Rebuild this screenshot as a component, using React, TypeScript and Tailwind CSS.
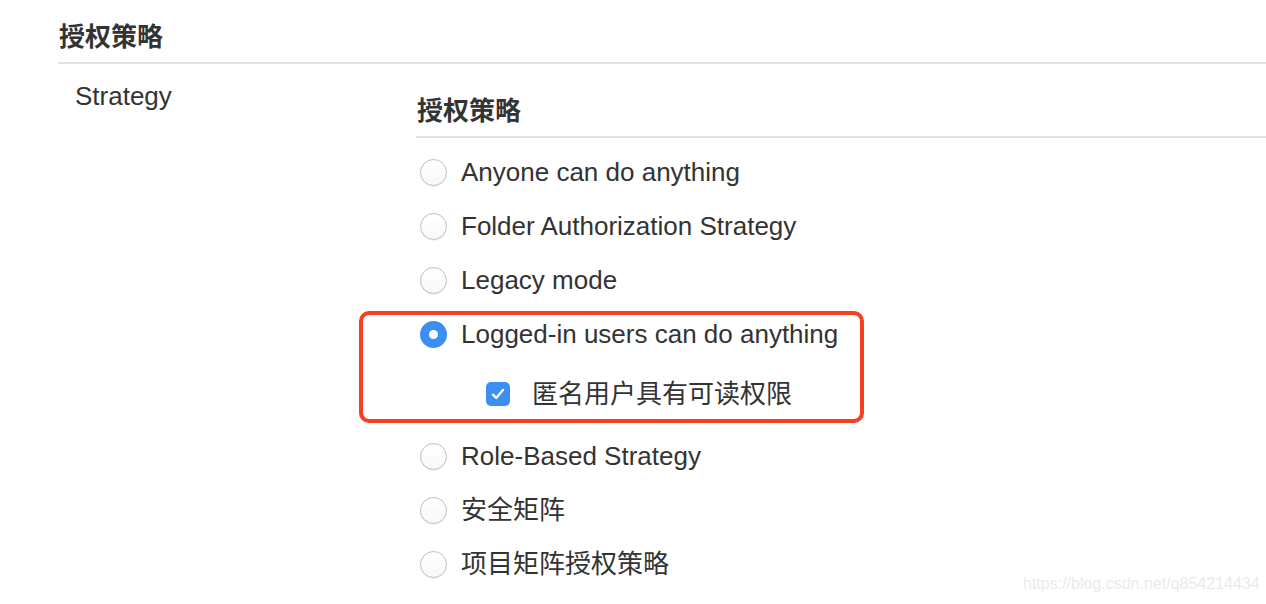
import React from "react";

interface Option {
  label: string;
  checked?: boolean;
}

const options: Option[] = [
  { label: "Anyone can do anything" },
  { label: "Folder Authorization Strategy" },
  { label: "Legacy mode" },
  { label: "Logged-in users can do anything", checked: true },
  { label: "Role-Based Strategy" },
  { label: "安全矩阵" },
  { label: "项目矩阵授权策略" },
];

function Radio({ checked }: { checked?: boolean }) {
  if (checked) {
    return (
      <span className="flex h-[27px] w-[27px] shrink-0 items-center justify-center rounded-full bg-[#3d8ef2]">
        <span className="h-[9px] w-[9px] rounded-full bg-white" />
      </span>
    );
  }
  return (
    <span className="h-[27px] w-[27px] shrink-0 rounded-full border border-[#bdbdbd] bg-linear-to-b from-white to-[#f8f8f8] shadow-[0_1px_1px_rgba(0,0,0,0.05)]" />
  );
}

function Checkbox() {
  return (
    <span className="flex h-[24px] w-[24px] shrink-0 items-center justify-center rounded-[5px] bg-[#3d8ef2]">
      <svg width="18" height="18" viewBox="0 0 18 18" fill="none">
        <path
          d="M4 9.6l3.2 3.4 6.8-8"
          stroke="white"
          strokeWidth="2.3"
          strokeLinecap="round"
          strokeLinejoin="round"
        />
      </svg>
    </span>
  );
}

export default function App() {
  return (
    <div
      className="relative h-[604px] w-[1266px] overflow-hidden bg-white text-[#333]"
      style={{ fontFamily: '"Liberation Sans", "Noto Sans CJK SC", sans-serif' }}
    >
      <div className="pl-[58px] pt-[21px]">
        <h2 className="pl-[1px] text-[26px] leading-[32px] font-bold">授权策略</h2>
        <div className="mt-[9px] border-b-2 border-[#e0e0e0]" />

        <div className="flex items-start">
          <div className="w-[358px] shrink-0 pt-[16px] pl-[17px] text-[26px] leading-[32px]">
            Strategy
          </div>

          <div className="flex-1 pt-[31px]">
            <h3 className="pl-[1px] text-[26px] leading-[32px] font-bold">授权策略</h3>
            <div className="mt-[9px] border-b-2 border-[#e0e0e0]" />

            <div className="pt-[7px] pl-[4px]">
              {options.map((opt) => (
                <React.Fragment key={opt.label}>
                  <label className="flex h-[54px] items-center gap-[14px] text-[26px] leading-[32px]">
                    <Radio checked={opt.checked} />
                    <span>{opt.label}</span>
                  </label>
                  {opt.checked && (
                    <label className="flex h-[68px] items-center gap-[22px] pb-[2px] pl-[66px] text-[26px] leading-[32px]">
                      <Checkbox />
                      <span>匿名用户具有可读权限</span>
                    </label>
                  )}
                </React.Fragment>
              ))}
            </div>
          </div>
        </div>
      </div>

      {/* annotation box */}
      <div className="pointer-events-none absolute top-[311px] left-[359px] h-[112px] w-[505px] rounded-[10px] border-4 border-[#f5411f]" />

      {/* watermark */}
      <div className="absolute top-[574px] left-[1023px] text-[16px] leading-[20px] text-[#ebebeb]">
        https://blog.csdn.net/q854214434
      </div>
    </div>
  );
}
